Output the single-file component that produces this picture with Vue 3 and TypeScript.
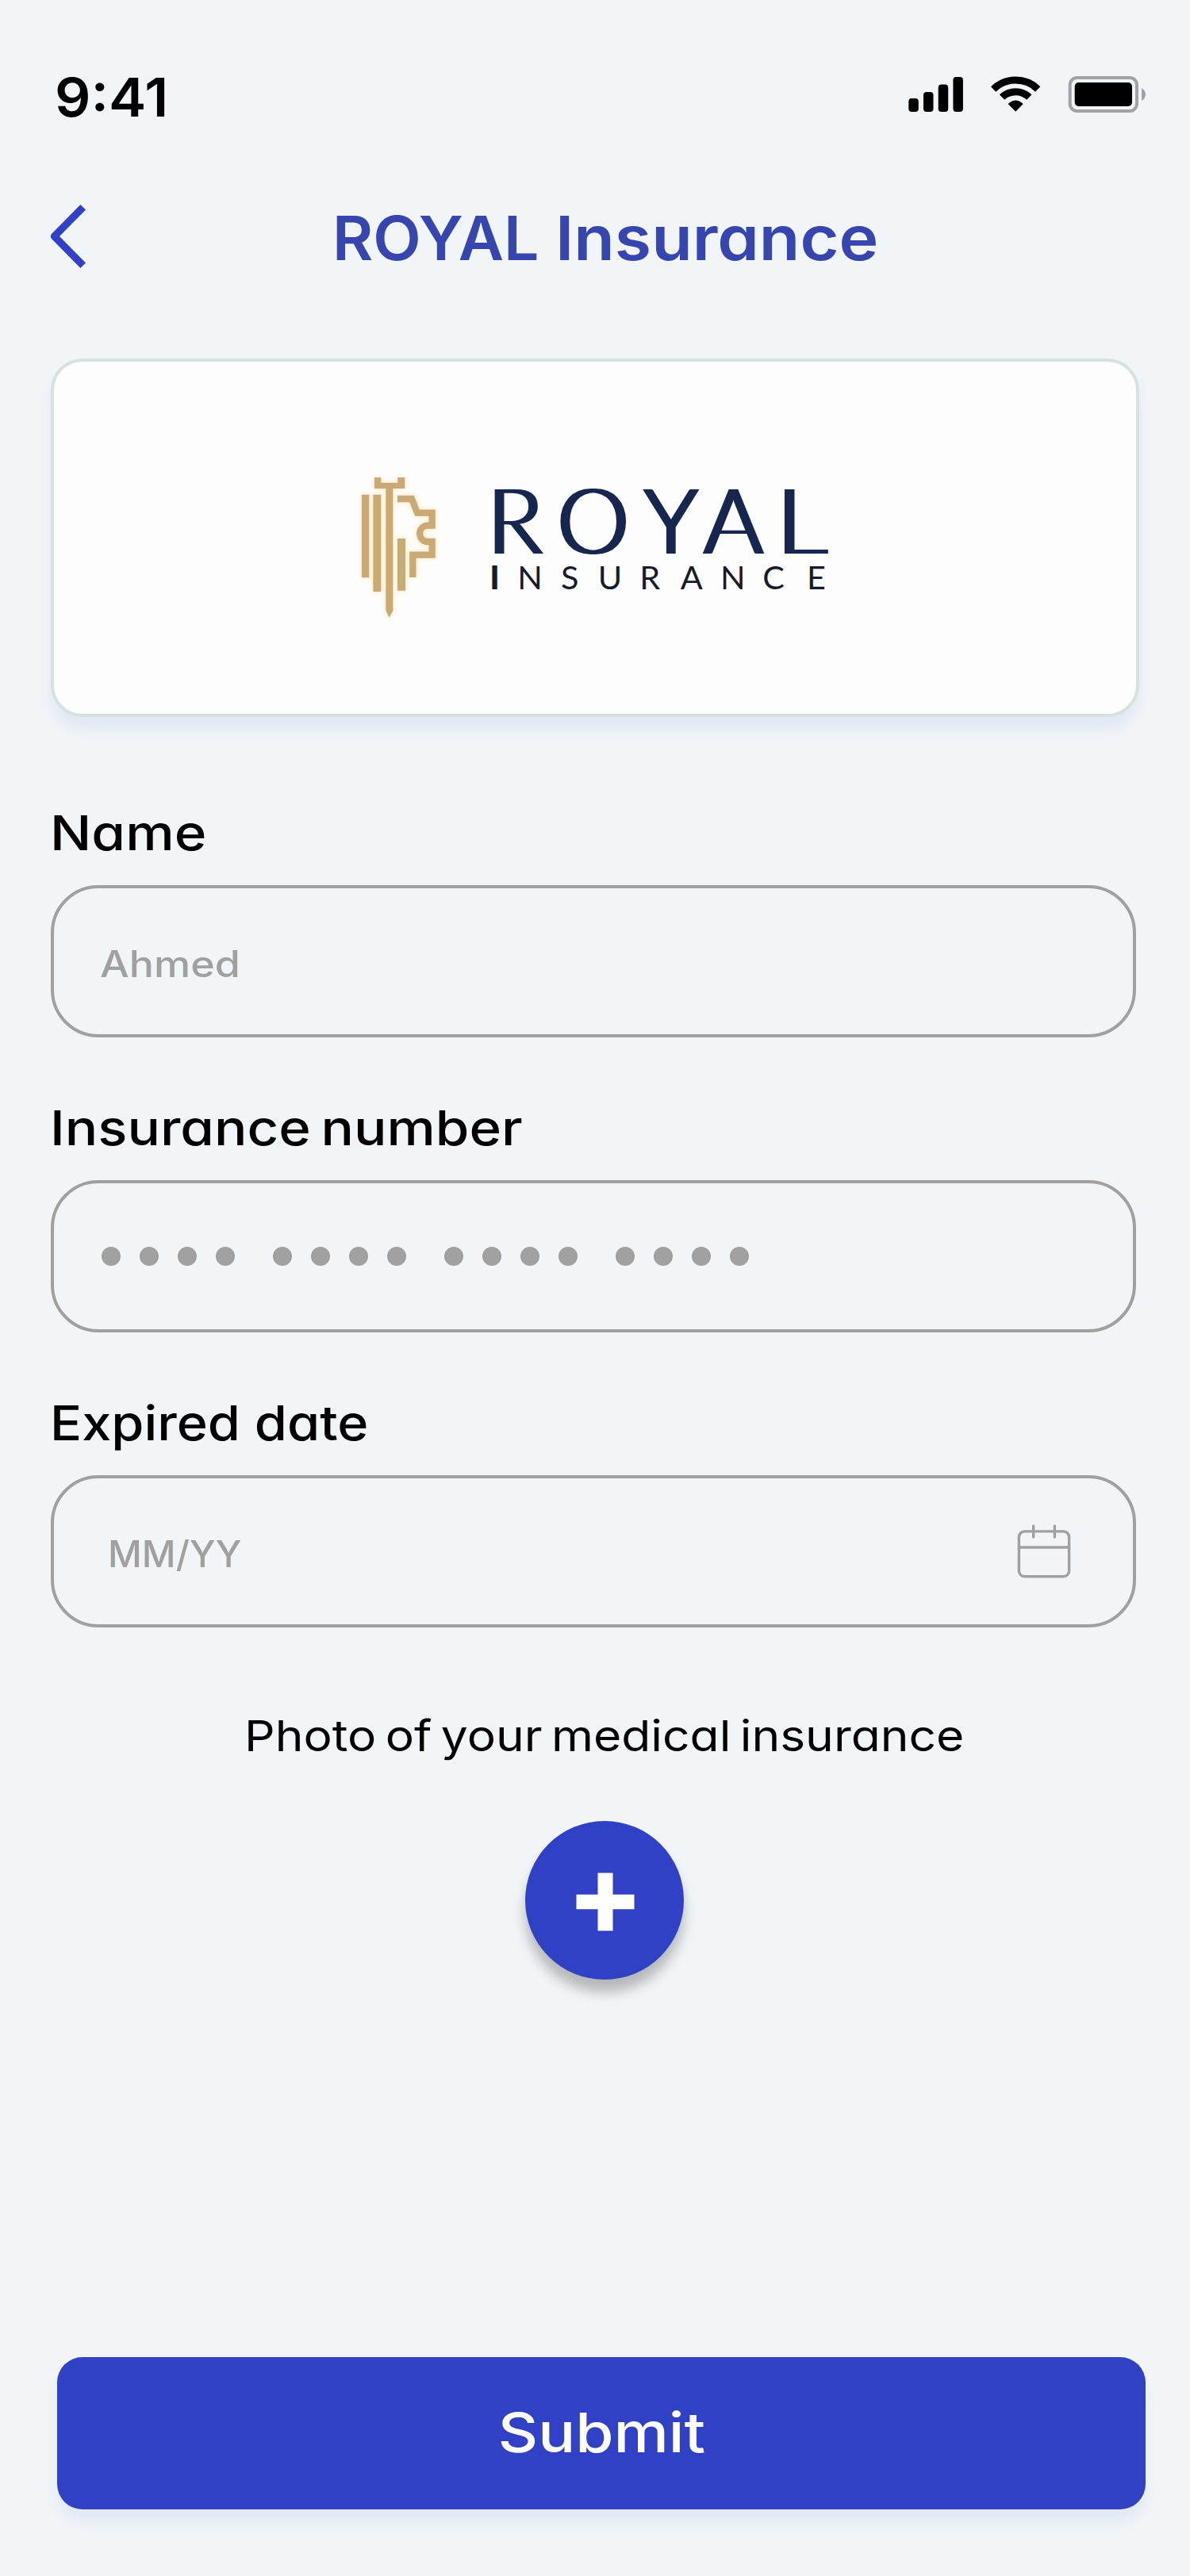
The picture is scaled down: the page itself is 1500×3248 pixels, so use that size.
<script setup lang="ts">
const groups = [0, 1, 2, 3]
</script>

<template>
  <main class="screen">
    <div class="status">
      <span class="time t">9:41</span>
      <svg class="status-icons" width="300" height="48" viewBox="1145 95 300 48">
        <g fill="#000">
          <rect x="1145.3" y="124" width="12.5" height="17" rx="4" />
          <rect x="1164" y="116" width="12.5" height="25" rx="4" />
          <rect x="1182.7" y="106.5" width="12.5" height="34.5" rx="4" />
          <rect x="1201.4" y="97" width="12.5" height="44" rx="4" />
          <path d="M1280.2 140.2 L1271.2 131 Q1280.2 122.8 1289.2 131Z" stroke="#000" stroke-width="1" stroke-linejoin="round" />
        </g>
        <g fill="none" stroke="#000" stroke-width="9">
          <path d="M1263 122.6 A24.8 24.8 0 0 1 1297.4 122.6" />
          <path d="M1252.2 112.4 A40.4 40.4 0 0 1 1308.2 112.4" />
        </g>
        <rect x="1348.7" y="98" width="84.3" height="42" rx="9" fill="none" stroke="#a0a2a3" stroke-width="4" />
        <rect x="1354.7" y="104" width="72.3" height="30" rx="5" fill="#000" />
        <path d="M1439 111 Q1444 114 1444 119 Q1444 124 1439 127Z" fill="#a0a2a3" />
      </svg>
    </div>

    <header class="header">
      <svg class="back" width="52" height="88" viewBox="60 254 52 88">
        <path d="M104.7 261.3 L68.5 298 L104.7 334.7" fill="none" stroke="#3041c5" stroke-width="9.3" stroke-linejoin="round" />
      </svg>
      <h1 class="title"><span class="t caps">ROYAL</span> <span class="t lower">Insurance</span></h1>
    </header>

    <section class="card">
      <svg class="logo" width="650" height="240" viewBox="0 0 1950 720">
        <defs>
          <filter id="broaden" x="-5%" y="-5%" width="110%" height="110%">
            <feMorphology operator="dilate" radius="9 0" />
          </filter>
        </defs>
        <g class="emblem">
          <path d="M78 161h28v314h-28z M121 161h30v367h-30z M213 327h30v197h-30z" />
          <path d="M126 96h25v20h63v-20h27v42h-45v462l-14 26l-13-26v-462h-43z" />
          <path class="line" d="M213 177H267L288 230H344V278H326C288 282 288 335 326 339H344V389H271V474" />
        </g>
        <text class="brand" y="383" filter="url(#broaden)"><tspan x="554">R</tspan><tspan x="818">O</tspan><tspan x="1146">Y</tspan><tspan x="1372">A</tspan><tspan x="1646" textLength="192" lengthAdjust="spacingAndGlyphs">L</tspan></text>
        <text class="sub" y="519" x="562 667 831 971 1129 1283 1434 1594 1761"><tspan font-weight="900">I</tspan>NSURANCE</text>
      </svg>
    </section>

    <section class="field first">
      <label class="label"><span class="t name">Name</span></label>
      <div class="input"><span class="placeholder t owner">Ahmed</span></div>
    </section>
    <section class="field">
      <label class="label"><span class="t number">Insurance number</span></label>
      <div class="input">
        <div v-for="g in groups" :key="g" class="group">
          <i v-for="d in groups" :key="d" class="dot" />
        </div>
      </div>
    </section>
    <section class="field">
      <label class="label"><span class="t expiry">Expired date</span></label>
      <div class="input between">
        <span class="placeholder t date">MM/YY</span>
        <svg class="calendar" width="70" height="70" viewBox="1281 1921 70 70">
          <g fill="none" stroke="#a0a0a1" stroke-width="3.4" stroke-linecap="round">
            <rect x="1284.4" y="1930.9" width="63.2" height="56.8" rx="7" />
            <path d="M1284.4 1951H1347.6M1302.7 1924V1938M1329.4 1924V1938" />
          </g>
        </svg>
      </div>
    </section>

    <p class="caption"><span class="t">Photo of your medical insurance</span></p>
    <button class="add" aria-label="Add photo">
      <svg width="74" height="74" viewBox="0 0 74 74"><path d="M27.5.5h19v27.3h27v18.4h-27v27.3h-19v-27.3h-27v-18.4h27z" fill="#fff" /></svg>
    </button>
    <button class="submit"><span class="t">Submit</span></button>
  </main>
</template>

<style>
body {
  background: #f1f5f8;
}
</style>

<style scoped>
.screen {
  box-sizing: border-box;
  display: flex;
  flex-direction: column;
  width: 1500px;
  height: 3248px;
  padding: 0 64px;
  background: #f1f5f8;
  color: #000;
  font-family: Inter, "Open Sans", sans-serif;
  font-feature-settings: "cv11";
}
.t {
  display: inline-block;
  white-space: nowrap;
  transform-origin: left center;
}
.status {
  display: flex;
  justify-content: space-between;
  height: 244px;
  align-items: center;
}
.time {
  margin-left: 5px;
  font-size: 68px;
  font-weight: 600;
  transform: scaleX(1.045);
}
.status-icons {
  margin: 0 -9px 6px 0;
}
.header {
  display: flex;
  align-items: center;
  height: 112px;
}
.back {
  margin: -4px 0 0 -4px;
}
.title {
  margin: 0 0 0 307px;
  font-size: 77px;
  line-height: 112px;
  font-weight: 600;
  color: #3745ae;
}
.caps {
  transform: scaleX(1.022);
}
.lower {
  margin-left: 7px;
  transform: scaleX(1.094);
}
.card {
  box-sizing: border-box;
  width: 1372px;
  height: 452px;
  margin-top: 96px;
  padding: 114px 0 0 362px;
  border: 4px solid #d7e1dd;
  border-radius: 40px;
  background: #fdfdfd;
  box-shadow: 0 16px 16px rgba(48, 75, 197, 0.075);
}
.logo {
  display: block;
}
.emblem {
  fill: #c9aa76;
  filter: drop-shadow(0 0 9px #ffe7b0);
}
.line {
  fill: none;
  stroke: #c9aa76;
  stroke-width: 25;
}
.brand {
  font: 300 341px Lato, sans-serif;
  fill: #14254f;
}
.sub {
  font: 400 124px Lato, sans-serif;
  fill: #151b2c;
}
.field {
  display: flex;
  flex-direction: column;
  gap: 28px;
  margin-top: 76px;
}
.field.first {
  margin-top: 108px;
}
.label {
  height: 76px;
  margin-left: -1px;
  font-size: 61px;
  line-height: 76px;
  font-weight: 500;
}
.name {
  transform: scaleX(1.135);
}
.number {
  word-spacing: -5px;
  transform: scaleX(1.131);
}
.expiry {
  transform: scaleX(1.092);
}
.input {
  box-sizing: border-box;
  display: flex;
  align-items: center;
  gap: 48px;
  width: 1368px;
  height: 192px;
  padding: 0 60px;
  border: 4px solid #a0a0a1;
  border-radius: 60px;
}
.between {
  justify-content: space-between;
  padding: 0 77px 0 68px;
}
.placeholder {
  padding-top: 6px;
  color: #a0a0a1;
  font-size: 46px;
  font-weight: 500;
}
.owner {
  margin-left: -2px;
  transform: scaleX(1.13);
}
.date {
  transform: scaleX(1.02);
}
.group {
  display: flex;
  gap: 24px;
}
.dot {
  width: 24px;
  height: 24px;
  border-radius: 50%;
  background: #a0a0a1;
}
.caption {
  margin: 97px 0 67px 244px;
  font-size: 54px;
  line-height: 80px;
}
.caption .t {
  word-spacing: -5px;
  transform: scaleX(1.121);
}
.add {
  display: flex;
  align-items: center;
  justify-content: center;
  width: 200px;
  height: 200px;
  margin-left: 598px;
  padding: 4px 0 0 2px;
  border: 0;
  border-radius: 50%;
  background: #3041c5;
  box-shadow: 0 16px 16px rgba(0, 0, 0, 0.25);
}
.submit {
  width: 1372px;
  height: 192px;
  margin: 476px 0 0 8px;
  padding: 0 0 2px;
  border: 0;
  border-radius: 32px;
  background: #3041c5;
  color: #fff;
  font: 500 69px Inter, sans-serif;
  box-shadow: 0 16px 16px rgba(48, 65, 197, 0.07);
}
.submit .t {
  transform: scaleX(1.132);
  transform-origin: center;
}
</style>
